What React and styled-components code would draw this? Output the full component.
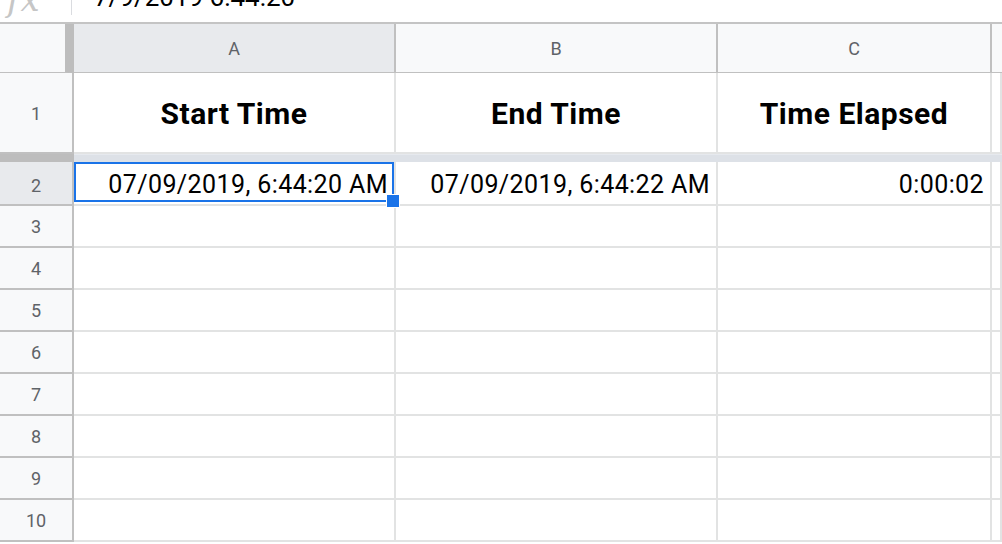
import React from "react";
import styled, { createGlobalStyle } from "styled-components";

const Global = createGlobalStyle`
  html, body { margin: 0; padding: 0; background: #fff; }
  body { font-family: Roboto, "Liberation Sans", Arial, sans-serif; overflow: hidden; }
`;

const Page = styled.div`
  width: 1002px;
  height: 544px;
  overflow: hidden;
  background: #fff;
  display: flex;
  flex-direction: column;
`;

const FormulaBar = styled.div`
  height: 22px;
  flex: none;
  display: flex;
  align-items: flex-start;
  border-bottom: 2px solid #c4c4c4;
  overflow: hidden;
`;

const FxBox = styled.div`
  width: 72px;
  height: 15px;
  flex: none;
  border-right: 1px solid #dadce0;
  display: flex;
  justify-content: flex-start;
  padding-left: 7px;
  box-sizing: border-box;
`;

const FxGlyph = styled.span`
  font-family: "DejaVu Serif", "Liberation Serif", serif;
  font-style: italic;
  font-size: 34px;
  line-height: 34px;
  margin-top: -18px;
  color: #c6c6c6;
  letter-spacing: 1px;
`;

const FormulaText = styled.span`
  font-size: 26px;
  line-height: 26px;
  margin-top: -16px;
  margin-left: 22px;
  color: #000;
`;

const Grid = styled.div`
  display: grid;
  grid-template-columns: 74px 322px 322px 274px 1fr;
  grid-template-rows: 49px 81px 8px 44px repeat(8, 42px);
  flex: 1;
`;

const Corner = styled.div`
  background: #f8f9fa;
  border-right: 9px solid #bdbdbd;
  border-bottom: 1px solid #c0c0c0;
  box-sizing: border-box;
`;

const ColHead = styled.div`
  background: ${(p) => (p.$active ? "#e8eaed" : "#f8f9fa")};
  border-right: ${(p) => (p.$last ? "0" : "2px solid #c0c0c0")};
  border-bottom: 1px solid #c0c0c0;
  box-sizing: border-box;
  display: flex;
  align-items: center;
  justify-content: center;
  color: #5f6368;
  font-size: 18px;
  padding-top: 1px;
`;

const RowHead = styled.div`
  background: ${(p) => (p.$active ? "#e8eaed" : "#f8f9fa")};
  border-right: 2px solid #c0c0c0;
  border-bottom: 2px solid #c0c0c0;
  box-sizing: border-box;
  display: flex;
  align-items: center;
  justify-content: center;
  color: #5f6368;
  font-size: 18px;
  padding-top: ${(p) => (p.$active ? "4px" : "1px")};
`;

const Cell = styled.div`
  position: relative;
  border-right: 2px solid #e2e3e3;
  border-bottom: 2px solid #e2e3e3;
  box-sizing: border-box;
  display: flex;
  align-items: center;
  justify-content: ${(p) => (p.$align === "right" ? "flex-end" : "center")};
  padding: ${(p) => (p.$bold ? "2px 0 0 0" : "3px 6px 0 0")};
  font-size: ${(p) => (p.$bold ? "30px" : "25px")};
  letter-spacing: ${(p) => (p.$bold ? "0.5px" : "0.4px")};
  font-weight: ${(p) => (p.$bold ? 700 : 400)};
  color: #000;
  white-space: nowrap;
`;

const FreezeLeft = styled.div`
  background: #bdbdbd;
`;

const FreezeBar = styled.div`
  background: #dde1e7;
  border-top: 1px solid #e6e9ee;
  box-sizing: border-box;
`;

const Selection = styled.div`
  position: absolute;
  left: 0;
  top: 0;
  right: 0;
  bottom: 2px;
  border: 2px solid #1a73e8;
  pointer-events: none;
`;

const Handle = styled.div`
  position: absolute;
  right: -8px;
  bottom: -8px;
  width: 12px;
  height: 12px;
  background: #1a73e8;
  border: 1px solid #fff;
  z-index: 2;
`;

const cols = ["A", "B", "C"];

export default function App() {
  const emptyRows = [3, 4, 5, 6, 7, 8, 9, 10];
  return (
    <Page>
      <Global />
      <FormulaBar>
        <FxBox>
          <FxGlyph>fx</FxGlyph>
        </FxBox>
        <FormulaText>7/9/2019 6:44:20</FormulaText>
      </FormulaBar>
      <Grid>
        <Corner />
        {cols.map((c, i) => (
          <ColHead key={c} $active={i === 0}>
            {c}
          </ColHead>
        ))}
        <ColHead $last />

        <RowHead>1</RowHead>
        <Cell $bold>Start Time</Cell>
        <Cell $bold>End Time</Cell>
        <Cell $bold>Time Elapsed</Cell>
        <Cell />

        <FreezeLeft />
        <FreezeBar />
        <FreezeBar />
        <FreezeBar />
        <FreezeBar />

        <RowHead $active>2</RowHead>
        <Cell $align="right">
          07/09/2019, 6:44:20 AM
          <Selection>
            <Handle />
          </Selection>
        </Cell>
        <Cell $align="right">07/09/2019, 6:44:22 AM</Cell>
        <Cell $align="right">0:00:02</Cell>
        <Cell />

        {emptyRows.map((r) => (
          <React.Fragment key={r}>
            <RowHead>{r}</RowHead>
            <Cell />
            <Cell />
            <Cell />
            <Cell />
          </React.Fragment>
        ))}
      </Grid>
    </Page>
  );
}
